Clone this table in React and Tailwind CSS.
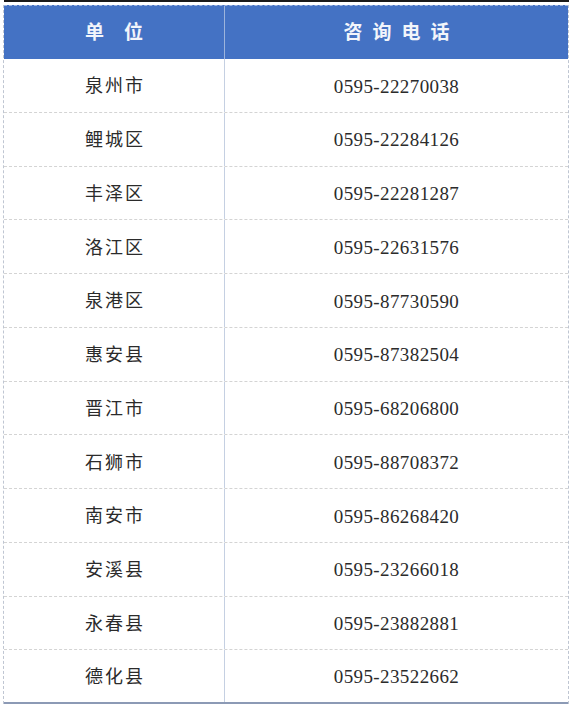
import React from "react";

const rows = [
  ["泉州市", "0595-22270038"],
  ["鲤城区", "0595-22284126"],
  ["丰泽区", "0595-22281287"],
  ["洛江区", "0595-22631576"],
  ["泉港区", "0595-87730590"],
  ["惠安县", "0595-87382504"],
  ["晋江市", "0595-68206800"],
  ["石狮市", "0595-88708372"],
  ["南安市", "0595-86268420"],
  ["安溪县", "0595-23266018"],
  ["永春县", "0595-23882881"],
  ["德化县", "0595-23522662"],
];

const font = { fontFamily: '"Liberation Serif", "Noto Sans CJK SC", serif' };

export default function App() {
  return (
    <div className="w-[576px] h-[709px] bg-white overflow-hidden" style={font}>
      <div className="ml-[3px] w-[566px]">
        <div className="h-[2px] bg-[#1a1a1a] ml-[1px]"></div>
        <div className="h-[3px]"></div>
        <div className="border-l border-r border-dashed border-[#bfc6d2]">
          <div className="flex h-[54px] bg-[#4472c4] border-t border-dashed border-[#9fb6e0] text-[#f2f5fb] font-bold text-[19px]">
            <div className="w-[220px] flex items-center justify-center tracking-[20px] pl-[20px] pt-[1px]">
              单位
            </div>
            <div className="flex-1 flex items-center justify-center border-l border-[#9db4dc] tracking-[10px] pl-[10px] pt-[1px]">
              咨询电话
            </div>
          </div>
          {rows.map((r, i) => (
            <div
              key={r[0]}
              className={
                "flex h-[53.75px] text-[#2b2b2b] " +
                (i < rows.length - 1
                  ? "border-b border-dashed border-[#d4d4d4]"
                  : "border-b-2 border-solid border-[#8c9ab5]")
              }
            >
              <div className="w-[220px] flex items-center justify-center text-[18px] tracking-[2px] pl-[2px] pt-[3px]">
                {r[0]}
              </div>
              <div className="flex-1 flex items-center justify-center border-l border-[#c5d0e2] text-[19px] tracking-[0.4px] pt-[3px]">
                {r[1]}
              </div>
            </div>
          ))}
        </div>
      </div>
    </div>
  );
}
